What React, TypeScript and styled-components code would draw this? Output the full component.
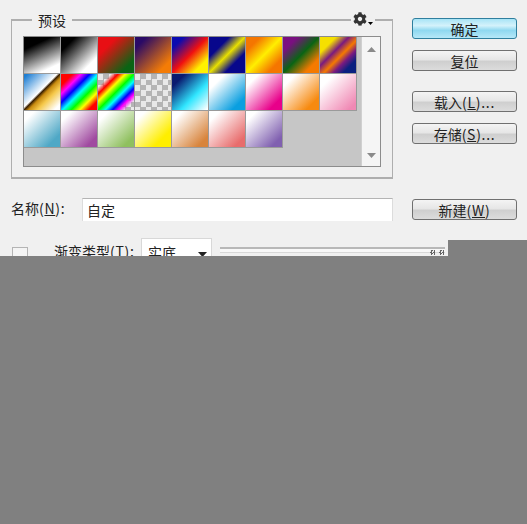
import React from "react";
import styled, { createGlobalStyle } from "styled-components";
import { FaCog } from "react-icons/fa";

const checker = "repeating-conic-gradient(#b4b4b4 0 25%, #e8e8e8 0 50%) 0 0 / 11px 11px";

const swatches: string[] = [
  "linear-gradient(155deg, #000 24%, #fff 82%)",
  "linear-gradient(135deg, #000 20%, #fff 78%)",
  "linear-gradient(135deg, #e80f14 26%, #0a6414 82%)",
  "linear-gradient(135deg, #2a0a66 16%, #f47c06 82%)",
  "linear-gradient(135deg, #0a0ab0 16%, #f01010 50%, #fff200 80%)",
  "linear-gradient(135deg, #07078c 28%, #e8e000 50%, #07078c 72%)",
  "linear-gradient(135deg, #f57600 20%, #ffee00 50%, #f57600 80%)",
  "linear-gradient(135deg, #7a1080 20%, #0a6414 50%, #f57a00 80%)",
  "linear-gradient(135deg, #f5e000 22%, #7a1a80 40%, #f57a00 55%, #7a1a80 68%, #0a2080 82%)",
  "linear-gradient(135deg, #1f7fd4 5%, #ffffff 46%, #3a2000 50%, #c88a10 56%, #f5c84a 68%, #ffffff 92%)",
  "linear-gradient(135deg, #f00 16%, #f0f 28%, #00f 40%, #0ff 52%, #0f0 64%, #ff0 76%, #f00 88%)",
  `linear-gradient(135deg, transparent 18%, #f00 28%, #ff0 38%, #0f0 50%, #0ff 60%, #00f 70%, #f0f 78%, transparent 88%), ${checker}`,
  checker,
  "linear-gradient(135deg, #0a1a70 18%, #30e6ff 62%, #ffffff 98%)",
  "linear-gradient(135deg, #ffffff 22%, #0a9fe0 82%)",
  "linear-gradient(135deg, #ffffff 18%, #e8008a 82%)",
  "linear-gradient(135deg, #ffffff 18%, #f78a10 82%)",
  "linear-gradient(135deg, #ffffff 20%, #f088b4 90%)",
  "linear-gradient(135deg, #ffffff 15%, #4fa8c6 82%)",
  "linear-gradient(135deg, #ffffff 15%, #a04aa0 85%)",
  "linear-gradient(135deg, #ffffff 15%, #8fc05e 85%)",
  "linear-gradient(135deg, #ffffff 15%, #ffee00 76%)",
  "linear-gradient(135deg, #ffffff 15%, #d8843c 85%)",
  "linear-gradient(135deg, #ffffff 15%, #e86c6c 85%)",
  "linear-gradient(135deg, #ffffff 15%, #8060b0 85%)",
];

const GlobalStyle = createGlobalStyle`
  html, body {
    margin: 0;
    padding: 0;
    background: #f0f0f0;
  }
`;

const Page = styled.div`
  position: relative;
  width: 527px;
  height: 524px;
  overflow: hidden;
  background: #f0f0f0;
  color: #222;
  font-family: "Noto Sans CJK SC", "Liberation Sans", sans-serif;
  font-size: 14px;
`;

const Dialog = styled.div`
  display: flex;
  gap: 19px;
  padding: 18px 10px 0 11px;
`;

const LeftColumn = styled.div`
  width: 382px;
  flex: none;
`;

const RightColumn = styled.div`
  width: 105px;
  flex: none;
  display: flex;
  flex-direction: column;
`;

const Group = styled.div`
  position: relative;
  height: 160px;
  margin-top: 1px;
  box-sizing: border-box;
  border: 2px solid #aeaeae;
  border-width: 2px 1px 2px 1px;
  padding: 15px 11px 0;
`;

const Legend = styled.span`
  position: absolute;
  left: 20px;
  top: -11px;
  padding: 0 6px;
  background: #f0f0f0;
  line-height: 20px;
`;

const GearButton = styled.span`
  position: absolute;
  right: 17px;
  top: -9px;
  padding: 0 2px;
  display: flex;
  align-items: flex-end;
  gap: 1px;
  background: #f0f0f0;
  color: #333;
`;

const Caret = styled.svg`
  width: 5px;
  height: 3px;
  margin-bottom: 1px;
`;

const Picker = styled.div`
  display: flex;
  height: 131px;
  width: 358px;
  border: 1px solid #8c8c8c;
  box-sizing: border-box;
`;

const SwatchArea = styled.div`
  flex: 1;
  background: #c6c6c6;
  display: grid;
  grid-template-columns: repeat(9, 37px);
  grid-auto-rows: 37px;
  align-content: start;
`;

const Swatch = styled.div<{ $fill: string }>`
  box-sizing: border-box;
  background: ${({ $fill }) => $fill};
  border-right: 1px solid #9a9a9a;
  border-bottom: 1px solid #9a9a9a;
`;

const Scrollbar = styled.div`
  width: 19px;
  flex: none;
  box-sizing: border-box;
  background: #f5f5f5;
  border-left: 1px solid #d0d0d0;
  display: flex;
  flex-direction: column;
  align-items: center;
  justify-content: space-between;
  padding: 10px 0 8px;
`;

const ScrollArrow = styled.svg`
  width: 9px;
  height: 5px;
  fill: #8a8a8a;
`;

const NameRow = styled.div`
  display: flex;
  align-items: center;
  margin-top: 19px;
  height: 23px;
`;

const NameLabel = styled.label`
  width: 71px;
  flex: none;
  position: relative;
  top: -2px;
`;

const NameInput = styled.div`
  flex: 1;
  height: 23px;
  box-sizing: border-box;
  background: #fff;
  border-top: 1px solid #b4b4b4;
  border-left: 1px solid #dcdcdc;
  border-right: 1px solid #dcdcdc;
  padding-left: 4px;
  line-height: 22px;
`;

const TypeRow = styled.div`
  display: flex;
  align-items: flex-start;
  margin-top: 17px;
  height: 30px;
`;

const CheckBox = styled.span`
  width: 16px;
  height: 16px;
  flex: none;
  margin: 9px 0 0 1px;
  box-sizing: border-box;
  border: 1px solid #b4b4b4;
  background: #f4f4f4;
`;

const TypeLabel = styled.label`
  margin: 3px 0 0 26px;
  width: 87px;
  flex: none;
  line-height: 20px;
`;

const TypeSelect = styled.div`
  position: relative;
  width: 71px;
  height: 30px;
  flex: none;
  box-sizing: border-box;
  background: #fff;
  border: 1px solid #d8d8d8;
  padding: 3px 0 0 6px;
  line-height: 20px;
`;

const SelectArrow = styled.svg`
  position: absolute;
  right: 4px;
  top: 13px;
  width: 9px;
  height: 5px;
  fill: #222;
`;

const SliderTrack = styled.div`
  position: relative;
  flex: 1;
  margin: 9px -52px 0 8px;
  height: 3px;
  border-top: 2px solid #b8b8b8;
  border-bottom: 1px solid #d8d8d8;
  background: #f8f8f8;
`;

const TrackDot = styled.span<{ $right: number }>`
  position: absolute;
  top: 1px;
  right: ${({ $right }) => $right}px;
  width: 5px;
  height: 5px;
  background: repeating-conic-gradient(#666 0 25%, #eee 0 50%) 0 0 / 3px 3px;
`;

const Latin = styled.span`
  letter-spacing: 0.7px;
`;

const Button = styled.button<{ $primary?: boolean; $gap?: number }>`
  width: 105px;
  height: 21px;
  margin-top: ${({ $gap }) => $gap ?? 0}px;
  padding: 1px 0 0;
  box-sizing: border-box;
  border-radius: 3px;
  border: 1px solid ${({ $primary }) => ($primary ? "#2f7f9e" : "#707070")};
  background: ${({ $primary }) =>
    $primary
      ? "linear-gradient(#a8e4f6, #d4f2fb 35%, #8fd8f0 60%, #b6e8f8)"
      : "linear-gradient(#f4f4f4, #e6e6e6 45%, #cfcfcf 55%, #dcdcdc)"};
  color: #222;
  font-family: inherit;
  font-size: 14px;
  line-height: 18px;
`;

const Cover = styled.div<{ $top: number; $left: number }>`
  position: absolute;
  top: ${({ $top }) => $top}px;
  left: ${({ $left }) => $left}px;
  right: 0;
  bottom: 0;
  background: #808080;
`;

export default function App() {
  return (
    <Page>
      <GlobalStyle />
      <Dialog>
        <LeftColumn>
          <Group>
            <Legend>预设</Legend>
            <GearButton>
              <FaCog size={14} />
              <Caret viewBox="0 0 5 3">
                <path d="M0 0h5L2.5 3z" />
              </Caret>
            </GearButton>
            <Picker>
              <SwatchArea>
                {swatches.map((fill, i) => (
                  <Swatch key={i} $fill={fill} />
                ))}
              </SwatchArea>
              <Scrollbar>
                <ScrollArrow viewBox="0 0 9 5">
                  <path d="M4.5 0L9 5H0z" />
                </ScrollArrow>
                <ScrollArrow viewBox="0 0 9 5">
                  <path d="M0 0h9L4.5 5z" />
                </ScrollArrow>
              </Scrollbar>
            </Picker>
          </Group>
          <NameRow>
            <NameLabel>
              名称<Latin>(<u>N</u>):</Latin>
            </NameLabel>
            <NameInput>自定</NameInput>
          </NameRow>
          <TypeRow>
            <CheckBox />
            <TypeLabel>
              渐变类型<Latin>(<u>T</u>):</Latin>
            </TypeLabel>
            <TypeSelect>
              实底
              <SelectArrow viewBox="0 0 9 5">
                <path d="M0 0h9L4.5 5z" />
              </SelectArrow>
            </TypeSelect>
            <SliderTrack>
              <TrackDot $right={10} />
              <TrackDot $right={1} />
            </SliderTrack>
          </TypeRow>
        </LeftColumn>
        <RightColumn>
          <Button $primary>确定</Button>
          <Button $gap={11}>复位</Button>
          <Button $gap={20}>
            载入<Latin>(<u>L</u>)...</Latin>
          </Button>
          <Button $gap={11}>
            存储<Latin>(<u>S</u>)...</Latin>
          </Button>
          <Button $gap={55}>
            新建<Latin>(<u>W</u>)</Latin>
          </Button>
        </RightColumn>
      </Dialog>
      <Cover $top={240} $left={448} />
      <Cover $top={256} $left={0} />
    </Page>
  );
}
